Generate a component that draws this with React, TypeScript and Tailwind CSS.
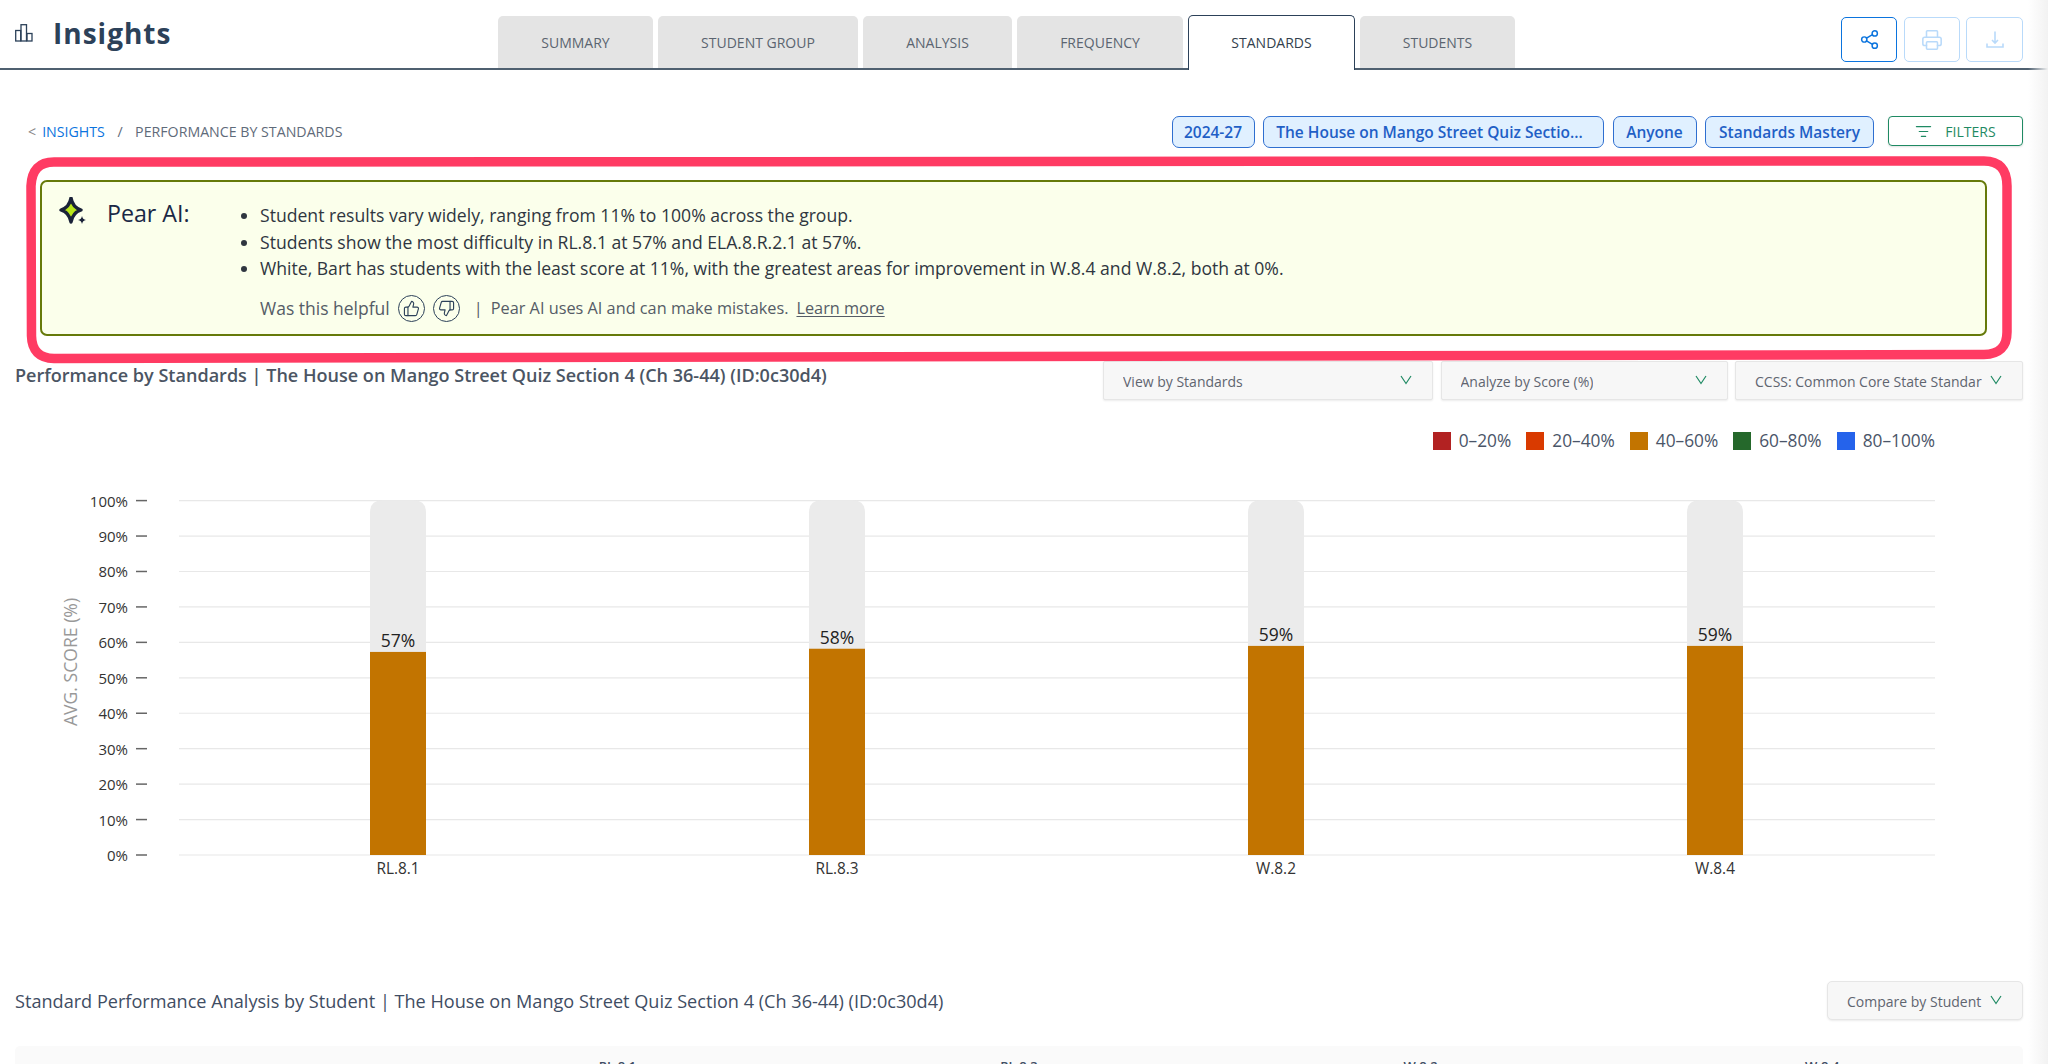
import React from 'react';
import { Share2, Printer, ThumbsUp, ThumbsDown, ListFilter } from 'lucide-react';

const tabs = [
  { label: 'SUMMARY', width: 'w-[155px]' },
  { label: 'STUDENT GROUP', width: 'w-[200px]' },
  { label: 'ANALYSIS', width: 'w-[149px]' },
  { label: 'FREQUENCY', width: 'w-[166px]' },
  { label: 'STANDARDS', width: 'w-[167px]', active: true },
  { label: 'STUDENTS', width: 'w-[155px]' },
];

const pills = [
  { label: '2024-27', width: 'w-[83px]' },
  { label: 'The House on Mango Street Quiz Sectio...', width: 'w-[341px] pr-[8px]' },
  { label: 'Anyone', width: 'w-[84px]' },
  { label: 'Standards Mastery', width: 'w-[169px]' },
];

const legend = [
  { label: '0–20%', color: 'bg-[#b22222]' },
  { label: '20–40%', color: 'bg-[#d93a00]' },
  { label: '40–60%', color: 'bg-[#c27400]' },
  { label: '60–80%', color: 'bg-[#25682b]' },
  { label: '80–100%', color: 'bg-[#2563eb]' },
];

const bars = [
  { label: 'RL.8.1', value: 57.3, text: '57%', center: 398 },
  { label: 'RL.8.3', value: 58.2, text: '58%', center: 837 },
  { label: 'W.8.2', value: 59, text: '59%', center: 1276 },
  { label: 'W.8.4', value: 59, text: '59%', center: 1715 },
];

const Chevron = () => (
  <svg width="14" height="10" viewBox="0 0 14 10" fill="none" className="shrink-0 -mt-[2px]">
    <path d="M2 1 L7 8.5 L12 1" stroke="#1f8a63" strokeWidth="1.2" />
  </svg>
);

const Dropdown = ({ label, width }: { label: string; width: string }) => (
  <div className={`${width} h-[39px] flex items-center justify-between pl-[19px] pr-[19px] bg-[#f7f7f7] border border-[#e6e6e6] rounded-[2px] shadow-[0_1px_2px_rgba(0,0,0,0.08)]`}>
    <span className="pt-[1px] text-[14px] text-[#5f6570] whitespace-nowrap overflow-hidden">{label}</span>
    <Chevron />
  </div>
);

const Chart = () => {
  const y0 = 375;
  const h = 354.4;
  const ticks = [0, 10, 20, 30, 40, 50, 60, 70, 80, 90, 100];
  return (
    <svg width="2048" height="420" viewBox="0 0 2048 420" className="block">
      {ticks.map((t) => {
        const y = y0 - (t / 100) * h;
        return (
          <g key={t}>
            <line x1="179" x2="1935" y1={y} y2={y} stroke="#e8e8e8" strokeWidth="1.2" />
            <line x1="136" x2="147" y1={y} y2={y} stroke="#666" strokeWidth="1.5" />
            <text x="128" y={y + 6} textAnchor="end" fontSize="15" fill="#333">{t}%</text>
          </g>
        );
      })}
      <text transform="translate(77 182) rotate(-90)" textAnchor="middle" fontSize="17.6" fill="#999">AVG. SCORE (%)</text>
      {bars.map((b) => {
        const top = y0 - (b.value / 100) * h;
        return (
          <g key={b.label}>
            <path
              d={`M${b.center - 28} ${y0} V${y0 - h + 12} Q${b.center - 28} ${y0 - h} ${b.center - 16} ${y0 - h} H${b.center + 16} Q${b.center + 28} ${y0 - h} ${b.center + 28} ${y0 - h + 12} V${y0} Z`}
              fill="#ebebeb"
            />
            <rect x={b.center - 28} y={top} width="56" height={y0 - top} fill="#c27400" />
            <text x={b.center} y={top - 4.5} textAnchor="middle" fontSize="17.5" fill="#222">{b.text}</text>
            <text x={b.center} y={y0 + 19} textAnchor="middle" fontSize="15.4" fill="#333">{b.label}</text>
          </g>
        );
      })}
    </svg>
  );
};

export default function App() {
  return (
    <div className="relative w-[2048px] h-[1064px] overflow-hidden bg-white text-[#333] font-['Open_Sans',sans-serif]">
      {/* top bar */}
      <header className="flex h-[70px] border-b-2 border-[#4f6070]">
        <div className="w-[498px] shrink-0 flex items-start pl-[15px] pt-[15px]">
          <svg width="18" height="18" viewBox="0 0 18 18" fill="none" stroke="#2c4159" strokeWidth="1.3" className="mt-[9px]">
            <rect x="0.7" y="6.5" width="5" height="10.5" />
            <rect x="6" y="0.7" width="5.5" height="16.3" />
            <rect x="12" y="9.5" width="5" height="7.5" />
          </svg>
          <h1 className="ml-[20px] text-[28px] leading-[36px] font-bold tracking-[1px] text-[#2c4159]">Insights</h1>
        </div>
        <nav className="flex gap-[5px] items-end">
          {tabs.map((t) =>
            t.active ? (
              <div key={t.label} className={`${t.width} h-[55px] -mb-[2px] pb-[2px] flex items-center justify-center bg-white border border-b-0 border-[#2c4159] rounded-t-[5px] text-[14px] text-[#333f4d]`}>
                {t.label}
              </div>
            ) : (
              <div key={t.label} className={`${t.width} h-[52px] flex items-center justify-center bg-[#e4e4e4] rounded-t-[5px] text-[14px] text-[#5b6470]`}>
                {t.label}
              </div>
            ),
          )}
        </nav>
        <div className="ml-auto mr-[25px] mt-[17px] flex gap-[6.5px]">
          <button className="w-[56px] h-[45px] flex items-center justify-center border border-[#0b74de] rounded-[5px] text-[#0b74de]">
            <Share2 size={21} strokeWidth={1.7} />
          </button>
          <button className="w-[56px] h-[45px] pl-[1px] flex items-center justify-center border border-[#b9dafa] rounded-[5px] text-[#b9dafa]">
            <Printer size={22} strokeWidth={1.7} />
          </button>
          <button className="w-[57px] h-[45px] pl-[1px] flex items-center justify-center border border-[#b9dafa] rounded-[5px] text-[#b9dafa]">
            <svg width="20" height="20" viewBox="0 0 20 20" fill="none" stroke="currentColor" strokeWidth="1.6">
              <path d="M10 1.5 V13 M7 10 L10 13 L13 10 M2 13.5 V17 H18 V13.5" />
            </svg>
          </button>
        </div>
      </header>

      {/* breadcrumb and filter pills */}
      <div className="mt-[46px] h-[32px] flex justify-between pl-[28px] pr-[25px]">
        <div className="h-[30px] pt-[2px] flex items-center text-[14.2px] text-[#5f6b7a]">
          <span className="mr-[6px] text-[#888]">&lt;</span>
          <span className="text-[#0b74de]">INSIGHTS</span>
          <span className="mx-[12.5px]">/</span>
          <span>PERFORMANCE BY STANDARDS</span>
        </div>
        <div className="flex gap-[8.5px]">
          {pills.map((p) => (
            <div key={p.label} className={`${p.width} h-[32px] pt-[1px] flex items-center justify-center bg-[#e0f0ff] border border-[#2f6fd0] rounded-[7px] text-[15.5px] font-semibold text-[#1f5fc6] whitespace-nowrap`}>
              {p.label}
            </div>
          ))}
          <div className="ml-[5.5px] w-[135px] h-[30px] pt-[1px] flex items-center justify-center gap-[13px] border border-[#1f8a63] rounded-[4px] text-[14px] font-medium text-[#1f8a63] shadow-[0_1px_2px_rgba(0,0,0,0.12)]">
            <ListFilter size={17} strokeWidth={1.7} />
            FILTERS
          </div>
        </div>
      </div>

      {/* Pear AI summary */}
      <section className="ml-[40px] mt-[32px] w-[1947px] h-[156px] flex bg-[#fbffeb] border-2 border-[#667a0a] rounded-[7px] pl-[17px] pt-[15px]">
        <svg width="28" height="29" viewBox="0 0 28 29" className="shrink-0">
          <path d="M12 1 C13 7 16 11 22 13 C16 15 13 19 12 25 C11 19 8 15 2 13 C8 11 11 7 12 1 Z" fill="#b8e61a" stroke="#1a2238" strokeWidth="3.4" strokeLinejoin="round" />
          <path d="M23 19 C23.5 21.5 24.5 22.5 27 23 C24.5 23.5 23.5 24.5 23 27 C22.5 24.5 21.5 23.5 19 23 C21.5 22.5 22.5 21.5 23 19 Z" fill="#1a2238" />
        </svg>
        <div className="ml-[20px] w-[137px] shrink-0 text-[23.2px] leading-[26px] font-medium text-[#1a2845] mt-[3px]">Pear AI:</div>
        <div className="pt-[6px] -mt-[1px]">
          <ul className="list-disc ml-[2px] pl-[14px] text-[17.6px] leading-[26.5px] text-[#2f3640] marker:text-[#2f3640]">
            <li>Student results vary widely, ranging from 11% to 100% across the group.</li>
            <li>Students show the most difficulty in RL.8.1 at 57% and ELA.8.R.2.1 at 57%.</li>
            <li>White, Bart has students with the least score at 11%, with the greatest areas for improvement in W.8.4 and W.8.2, both at 0%.</li>
          </ul>
          <div className="mt-[13px] ml-[16px] flex items-center text-[#555c66]">
            <span className="text-[17.5px]">Was this helpful</span>
            <span className="ml-[8px] w-[27px] h-[27px] flex items-center justify-center rounded-full border border-[#2c4159] text-[#2c4159]">
              <ThumbsUp size={17} strokeWidth={1.6} />
            </span>
            <span className="ml-[8px] w-[27px] h-[27px] flex items-center justify-center rounded-full border border-[#2c4159] text-[#2c4159]">
              <ThumbsDown size={17} strokeWidth={1.6} />
            </span>
            <span className="ml-[14px] text-[16.3px]">|</span>
            <span className="ml-[8px] text-[16.3px]">Pear AI uses AI and can make mistakes.</span>
            <span className="ml-[8px] text-[16.3px] underline underline-offset-2">Learn more</span>
          </div>
        </div>
      </section>

      {/* chart header */}
      <div className="mt-[25px] h-[39px] flex justify-between pl-[15px] pr-[25px]">
        <h2 className="text-[18.06px] leading-[28px] font-semibold text-[#4b5563]">
          Performance by Standards | The House on Mango Street Quiz Section 4 (Ch 36-44) (ID:0c30d4)
        </h2>
        <div className="flex gap-[7.5px]">
          <Dropdown label="View by Standards" width="w-[330px]" />
          <Dropdown label="Analyze by Score (%)" width="w-[287px]" />
          <Dropdown label="CCSS: Common Core State Standar" width="w-[288px]" />
        </div>
      </div>

      {/* legend */}
      <div className="mt-[32px] h-[18px] flex justify-end gap-[15px] pr-[113px]">
        {legend.map((l) => (
          <div key={l.label} className="flex items-center gap-[8px] text-[17.3px] text-[#4a5568]">
            <span className={`w-[18px] h-[18px] ${l.color}`} />
            {l.label}
          </div>
        ))}
      </div>

      <div className="mt-[30px]">
        <Chart />
      </div>

      {/* student table */}
      <div className="mt-[81px] h-[39px] flex items-center justify-between pl-[15px] pr-[25px]">
        <h2 className="pt-[2px] text-[18.12px] font-medium text-[#3f4d63]">
          Standard Performance Analysis by Student | The House on Mango Street Quiz Section 4 (Ch 36-44) (ID:0c30d4)
        </h2>
        <div className="w-[196px] h-[39px] flex items-center justify-between pl-[19px] pr-[19px] bg-[#f7f7f7] border border-[#e6e6e6] rounded-[5px] shadow-[0_1px_2px_rgba(0,0,0,0.08)]">
          <span className="pt-[1px] text-[14px] text-[#5f6570] whitespace-nowrap">Compare by Student</span>
          <Chevron />
        </div>
      </div>
      <div className="mt-[26px] ml-[15px] mr-[25px] h-[60px] grid grid-cols-5 bg-[#fafafa] rounded-t-[5px] pt-[11px] text-center text-[13px] font-semibold text-[#3f4d63]">
        <span />
        <span>RL.8.1</span>
        <span>RL.8.3</span>
        <span>W.8.2</span>
        <span>W.8.4</span>
      </div>

      {/* hand drawn highlight around the summary */}
      <svg width="2048" height="400" viewBox="0 0 2048 400" fill="none" className="absolute left-0 top-0 pointer-events-none">
        <path
          d="M54 162 L1984 161 Q2007 161 2007 186 L2007 332 Q2007 354 1984 354.5 L54 358.5 Q32 358 31.5 336 L31 186 Q32 162 54 162 Z"
          stroke="#ff3b63"
          strokeWidth="9.5"
        />
      </svg>

      {/* faint shade at the right edge */}
      <div className="absolute right-0 top-0 w-[20px] h-full bg-gradient-to-r from-transparent to-[#f2f2f2] pointer-events-none" />
    </div>
  );
}
